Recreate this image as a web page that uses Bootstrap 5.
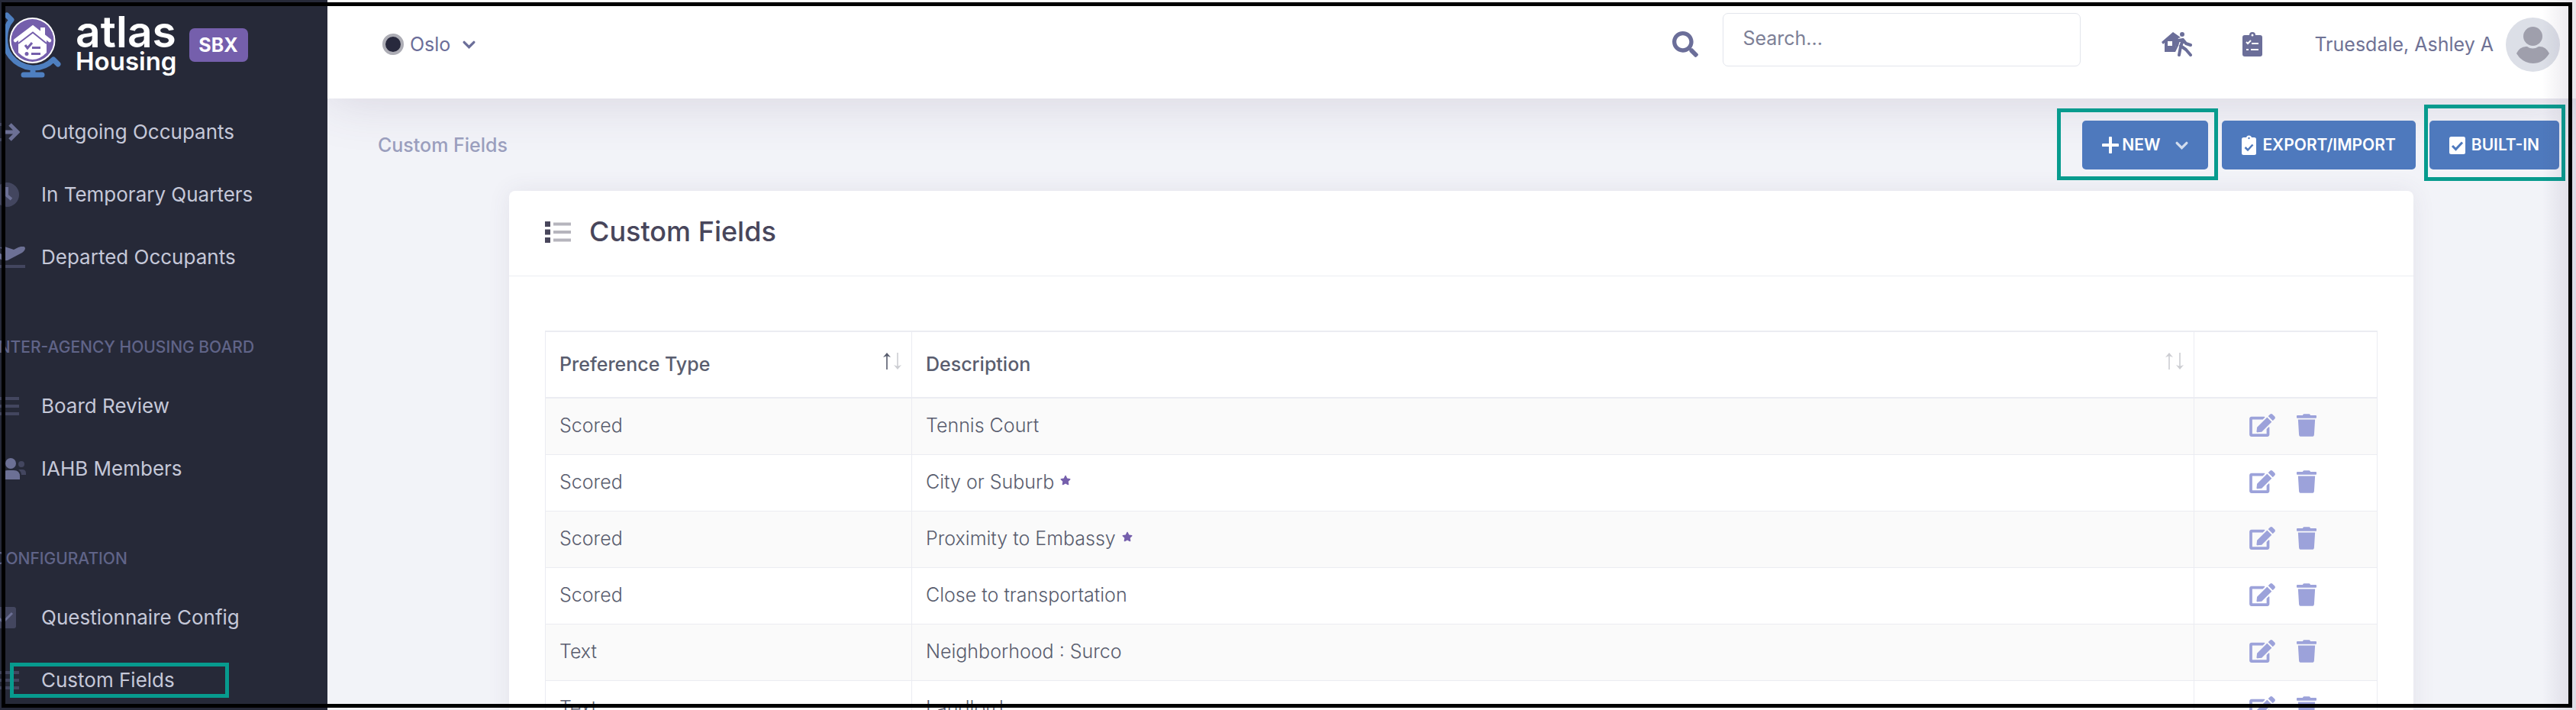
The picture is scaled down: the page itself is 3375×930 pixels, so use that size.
<!DOCTYPE html>
<html lang="en">
<head>
<meta charset="utf-8">
<meta name="viewport" content="width=device-width, initial-scale=1">
<title>Custom Fields - atlas Housing</title>
<link href="https://cdn.jsdelivr.net/npm/bootstrap@5.3.0/dist/css/bootstrap.min.css" rel="stylesheet">
<style>
  body { font-family: Inter, "Open Sans", sans-serif; font-size: 25px; line-height: 34px; color: #595d6e; background: #f2f3f8; }
  svg { fill: currentColor; display: block; flex: none; }
  a { text-decoration: none; }

  .side { width: 429px; background: #262938; overflow: hidden; position: relative; z-index: 2; }
  .brand-row { height: 132px; padding: 3px 0 0; }
  .brand-name { font-weight: 600; font-size: 57px; line-height: 45px; }
  .brand-sub { font-weight: 600; font-size: 33px; line-height: 33px; }
  .sbx { background: #755fac; width: 77px; height: 44px; margin-top: 34px; border-radius: 7px; font-size: 25px; font-weight: 700; }
  .side-list { margin-left: -8px; }
  .side-link { height: 82px; color: #c5c8d8; font-size: 26px; position: relative; }
  .side-icon { width: 62px; color: #6c7095; }
  .side-icon .dim { opacity: .42; }
  .side-head { height: 113px; padding-top: 60px; font-size: 21px; font-weight: 500; color: #606488; white-space: nowrap; }

  .topbar { height: 129px; padding: 17px 21px 0 72px; background: #fff; box-shadow: 0 0 70px rgba(82, 63, 105, .18); position: relative; }
  .topbar-part { height: 82px; }
  .site { color: #3b3d52; }
  .site-dot { width: 28px; height: 28px; border: 4px solid #adadb5; border-radius: 50%; background: #28293d; }
  .find-box { width: 469px; height: 70px; font-size: 25px; padding: 0 25px 5px; border: 1px solid #e2e5ec; border-radius: 7px; }
  .find-box::placeholder { color: #7d8096; }
  .tool { color: #6b6e99; background: none; border: 0; padding: 0; }
  .tool-leave { margin: 0 50px 0 106px; }
  .tool-tasks { margin: 0 68px 0 16px; }
  .user { color: #6f7295; }

  .content { padding: 29px 22px 0 66px; position: relative; }
  .crumb { color: #9a9ebd; font-weight: 500; }
  .acts { gap: 18px; }
  .act { height: 64px; border-radius: 5px; padding: 0 26px; font-size: 21px; font-weight: 600; background: #4e79bd; border: 0; color: #fff; }
  .mark-box { position: absolute; border: 5px solid #079b8e; pointer-events: none; z-index: 5; }
  .mark-new { inset: -16px -13px -14px -33px; }
  .mark-built { inset: -21px -8px -15px -7px; }
  .mark-side { left: 21px; width: 287px; top: 18px; bottom: 18px; }

  .panel { margin: 28px 191px 0 172px; border: 0; border-radius: 8px; box-shadow: 0 0 30px rgba(82, 63, 105, .09); }
  .panel-head { height: 112px; padding: 0 47px 3px; border-bottom: 1px solid #ebedf2; color: #48465b; }
  .panel-head h1 { font-size: 36px; font-weight: 500; }
  .panel-body { padding: 71px 47px 0; }
  .fields { table-layout: fixed; color: #595d6e; --bs-table-border-color: #ebecf2; border-color: #ebecf2; --bs-table-striped-bg: #fafafa; --bs-table-striped-color: #595d6e; --bs-table-color: #595d6e; }
  .fields th { height: 87px; padding: 0 13px 2px 18px; font-weight: 500; border-top-width: 2px; border-bottom-width: 2px; vertical-align: middle; }
  .fields td { height: 74px; padding: 0 18px 2px; font-weight: 300; vertical-align: middle; }
  .c-type { width: 20%; }
  .c-act { width: 10%; }
  .star { color: #755fac; }
  .row-tool { color: #9ca2da; background: none; border: 0; padding: 0; }
  .fade-sort { opacity: .3; }

  .edge { position: fixed; top: 0; right: 0; bottom: 0; width: 44px; background: linear-gradient(90deg, rgba(82, 63, 105, 0), rgba(82, 63, 105, .13)); pointer-events: none; z-index: 9; }
  .frame { position: fixed; inset: 3px 5px 3px 2px; border: 5px solid #000; pointer-events: none; z-index: 10; }
</style>
</head>
<body class="overflow-hidden">
<svg class="d-none" aria-hidden="true">
  <symbol id="i-edit" viewBox="0 0 576 512"><path d="M402.6 83.2l90.2 90.2c3.8 3.8 3.8 10 0 13.8L274.4 405.6l-92.8 10.3c-12.4 1.4-22.9-9.1-21.5-21.5l10.3-92.8L388.8 83.2c3.8-3.8 10-3.8 13.8 0zm162-22.9l-48.8-48.8c-15.2-15.2-39.9-15.2-55.2 0l-35.4 35.4c-3.8 3.8-3.8 10 0 13.8l90.2 90.2c3.8 3.8 10 3.8 13.8 0l35.4-35.4c15.2-15.3 15.2-40 0-55.2zM384 346.2V448H64V128h229.8c3.2 0 6.2-1.3 8.5-3.5l40-40c7.6-7.6 2.2-20.5-8.5-20.5H48C21.5 64 0 85.5 0 112v352c0 26.5 21.5 48 48 48h352c26.5 0 48-21.5 48-48V306.2c0-10.7-12.9-16-20.5-8.5l-40 40c-2.2 2.3-3.5 5.3-3.5 8.5z"/></symbol>
  <symbol id="i-trash" viewBox="0 0 448 512"><path d="M432 32H312l-9.4-18.7A24 24 0 0 0 281.1 0H166.8a23.72 23.72 0 0 0-21.4 13.3L136 32H16A16 16 0 0 0 0 48v32a16 16 0 0 0 16 16h416a16 16 0 0 0 16-16V48a16 16 0 0 0-16-16zM32 128l21.2 339a48 48 0 0 0 47.9 45h245.8a48 48 0 0 0 47.9-45L416 128H32z"/></symbol>
  <symbol id="i-star" viewBox="0 0 576 512"><path d="M259.3 17.8L194 150.2 47.9 171.5c-26.200 3.800-36.700 36.100-17.700 54.600l105.700 103-25 145.500c-4.500 26.300 23.200 46 46.400 33.700L288 439.600l130.700 68.700c23.200 12.200 50.900-7.400 46.400-33.700l-25-145.500 105.700-103c19-18.500 8.500-50.800-17.700-54.600L382 150.200 316.700 17.800c-11.700-23.600-45.600-23.900-57.400 0z"/></symbol>
  <symbol id="i-bars" viewBox="0 0 34 28"><path d="M0 0h7v7H0zM0 10.500h7v7H0zM0 21h7v7H0z"/><path opacity=".4" d="M11 1.500h23v4H11zM11 12h23v4H11zM11 22.500h23v4H11z"/></symbol>
  <symbol id="i-chev" viewBox="0 0 16 10"><path d="M2 2l6 6 6-6" fill="none" stroke="currentColor" stroke-width="3" stroke-linecap="round"/></symbol>
  <symbol id="i-sort" viewBox="0 0 10 22"><path d="M5 0L10 6 5.800 4.500V22H4.200V4.500L0 6z"/></symbol>
</svg>

<div class="d-flex vh-100">
  <nav class="side flex-shrink-0" aria-label="Main">
    <div class="brand-row d-flex align-items-start text-white">
      <svg width="99" height="108" viewBox="0 3 99 108" aria-hidden="true">
        <g fill="none" stroke="#4e7fc0" stroke-width="7" stroke-linecap="round" stroke-linejoin="round"><path d="M9 20L15 26C4 38 4 62 14 74C28 91 53 95 70 78L76 84M43 89v8M31 98h24"/></g>
        <circle cx="42.500" cy="53" r="30" fill="#fff"/><circle cx="42.500" cy="53" r="28" fill="#755fac"/>
        <path d="M24 51L43 36l18 15v18Q43 87 24 69z" fill="#fff"/>
        <path d="M20 53L43 35.500 65 53" fill="none" stroke="#fff" stroke-width="4.500" stroke-linecap="round"/><path d="M53 36h6v12l-6-5z" fill="#fff"/>
        <path d="M24 57L43 42.500 61 57" fill="none" stroke="#755fac" stroke-width="2"/>
        <path d="M33 59l3 4 6-7M42 62.500h11M41 70.500h12" fill="none" stroke="#755fac" stroke-width="3"/><circle cx="35" cy="70.500" r="2.500" fill="#755fac"/>
      </svg>
      <div class="pt-3">
        <div class="brand-name">atlas</div>
        <div class="brand-sub">Housing</div>
      </div>
      <span class="sbx d-flex align-items-center justify-content-center ms-3">SBX</span>
    </div>
    <div class="side-list">
      <a href="#" class="side-link d-flex align-items-center"><span class="side-icon"><svg width="34" height="28" viewBox="0 0 34 28"><path class="dim" d="M11 4H4v20h7" fill="none" stroke="currentColor" stroke-width="4"/><path d="M10 14h21M21 4l10 10-10 10" fill="none" stroke="currentColor" stroke-width="5"/></svg></span>Outgoing Occupants</a>
      <a href="#" class="side-link d-flex align-items-center"><span class="side-icon"><svg width="34" height="32" viewBox="0 0 34 32"><circle class="dim" cx="17" cy="16" r="16"/><path d="M17 6v11l6 5" fill="none" stroke="currentColor" stroke-width="4"/></svg></span>In Temporary Quarters</a>
      <a href="#" class="side-link d-flex align-items-center"><span class="side-icon"><svg width="41" height="28" viewBox="0 0 41 28"><path d="M0 8l5-1 5 3 5-2-7-7 6-1 12 4 6-3q8-3 9 1 0 3-4 6L18 18q-5 1-9-1z"/><path class="dim" d="M0 24h41v4H0z"/></svg></span>Departed Occupants</a>
      <div class="side-head">INTER-AGENCY HOUSING BOARD</div>
      <a href="#" class="side-link d-flex align-items-center"><span class="side-icon"><svg class="dim" width="33" height="24" viewBox="0 0 33 24"><path d="M0 0h33v4H0zM0 10h33v4H0zM0 20h33v4H0z"/></svg></span>Board Review</a>
      <a href="#" class="side-link d-flex align-items-center"><span class="side-icon"><svg width="42" height="28" viewBox="0 0 42 28"><circle cx="22" cy="7" r="7"/><path d="M10 28v-4q0-8 8-8h8q8 0 8 8v4z"/><g class="dim"><circle cx="36" cy="8" r="4"/><path d="M32 15h5q5 0 5 5v2h-6q0-4-4-7z"/></g></svg></span>IAHB Members</a>
      <div class="side-head">CONFIGURATION</div>
      <a href="#" class="side-link d-flex align-items-center"><span class="side-icon"><svg width="29" height="28" viewBox="0 0 29 28"><rect class="dim" width="29" height="28" rx="3"/><path d="M6 14l6 6L24 8" fill="none" stroke="currentColor" stroke-width="3"/></svg></span>Questionnaire Config</a>
      <a href="#" class="side-link d-flex align-items-center"><span class="side-icon"><svg class="dim" width="33" height="24" viewBox="0 0 33 24"><path d="M0 0h33v4H0zM0 10h33v4H0zM0 20h33v4H0z"/></svg></span>Custom Fields<span class="mark-box mark-side"></span></a>
    </div>
  </nav>

  <div class="flex-grow-1">
    <header class="topbar d-flex align-items-start justify-content-between">
      <button type="button" class="tool site topbar-part d-flex align-items-center gap-2">
        <span class="site-dot"></span><span>Oslo</span>
        <svg class="ms-2" width="17" height="11"><use href="#i-chev"/></svg>
      </button>
      <div class="d-flex align-items-start">
        <label for="find" class="tool topbar-part d-flex align-items-center me-4 pe-2" aria-label="Search"><svg width="34" height="34" viewBox="0 0 512 512"><path d="M505 442.700L405.300 343c-4.500-4.500-10.600-7-17-7H372c27.600-35.300 44-79.700 44-128C416 93.100 322.900 0 208 0S0 93.100 0 208s93.100 208 208 208c48.300 0 92.700-16.400 128-44v16.300c0 6.400 2.500 12.500 7 17l99.700 99.700c9.400 9.400 24.600 9.400 33.900 0l28.300-28.300c9.400-9.400 9.400-24.600.1-34zM208 336c-70.700 0-128-57.200-128-128 0-70.700 57.200-128 128-128 70.700 0 128 57.200 128 128 0 70.700-57.200 128-128 128z"/></svg></label>
        <input id="find" type="text" class="form-control find-box" placeholder="Search...">
        <div class="topbar-part d-flex align-items-center">
          <button type="button" class="tool tool-leave" aria-label="Departures"><svg width="40" height="32" viewBox="0 0 40 32"><path fill-rule="evenodd" d="M15 0L0 13l2 3 2-2v12h14l3-6-3-1 4-11 3-1zM8 12h6v6H8z"/><circle cx="27" cy="3" r="3"/><path d="M20 18l2-7 6-1 4 5 6 2M28 10l-3 9-2 11M25 18l7 5 6 7" fill="none" stroke="currentColor" stroke-width="4" stroke-linecap="round" stroke-linejoin="round"/></svg></button>
          <button type="button" class="tool tool-tasks" aria-label="Tasks"><svg width="26" height="32" viewBox="0 0 26 32"><rect y="4" width="26" height="28" rx="3"/><circle cx="13" cy="4" r="4"/><g fill="none" stroke="#fff" stroke-width="2"><path d="M5 13l2 2 4-4M12 15h9M11 23h10M5 23h3"/></g><circle cx="13" cy="4" r="1.500" fill="#fff"/></svg></button>
          <a href="#" class="user d-flex align-items-center gap-3">Truesdale, Ashley A
            <svg width="71" height="71" viewBox="0 0 71 71" aria-hidden="true"><circle cx="35.500" cy="35.500" r="35.500" fill="#dcdfe7"/><ellipse cx="35.500" cy="24.500" rx="12.500" ry="12.500" fill="#9f9fac"/><path d="M14 47q5-10 14-9 7 5 15 0 9-1 14 9-8 13-21.500 13T14 47z" fill="#9f9fac"/></svg></a>
        </div>
      </div>
    </header>

    <main class="content">
      <div class="d-flex align-items-center justify-content-between">
        <div class="crumb">Custom Fields</div>
        <div class="d-flex acts">
          <div class="position-relative">
            <button type="button" class="btn act d-flex align-items-center gap-1">
              <svg width="22" height="22" viewBox="0 0 22 22"><path d="M11 1.500v19M1.500 11h19" stroke="#fff" stroke-width="4" stroke-linecap="round"/></svg>NEW
              <svg class="ms-3 opacity-75" width="17" height="11"><use href="#i-chev"/></svg>
            </button>
            <span class="mark-box mark-new"></span>
          </div>
          <button type="button" class="btn act d-flex align-items-center gap-2">
            <svg width="19" height="26" viewBox="0 0 19 26"><rect y="3" width="19" height="23" rx="2.500"/><circle cx="9.500" cy="4" r="3.500"/><circle cx="9.500" cy="4" r="1.200" fill="#4e79bd"/><path d="M4.500 16l3.500 3.500 6.500-7" fill="none" stroke="#4e79bd" stroke-width="2.500"/></svg>EXPORT/IMPORT
          </button>
          <div class="position-relative">
            <button type="button" class="btn act d-flex align-items-center gap-2">
              <svg width="21" height="23" viewBox="0 0 21 23"><rect width="21" height="23" rx="2.500"/><path d="M4 12l4.500 4.500L17 7.500" fill="none" stroke="#4e79bd" stroke-width="3"/></svg>BUILT-IN
            </button>
            <span class="mark-box mark-built"></span>
          </div>
        </div>
      </div>

      <section class="card panel">
        <div class="panel-head d-flex align-items-center">
          <svg width="34" height="28" aria-hidden="true"><use href="#i-bars"/></svg>
          <h1 class="mb-0 ms-4">Custom Fields</h1>
        </div>
        <div class="panel-body">
          <table class="table table-bordered table-striped fields mb-0">
            <thead>
              <tr>
                <th class="c-type" scope="col"><div class="d-flex align-items-center justify-content-between">Preference Type<span class="d-flex gap-1 mb-2"><svg width="10" height="22"><use href="#i-sort"/></svg><svg class="fade-sort" width="10" height="22" viewBox="0 0 10 22"><use href="#i-sort" width="10" height="22" transform="rotate(180 5 11)"/></svg></span></div></th>
                <th scope="col"><div class="d-flex align-items-center justify-content-between">Description<span class="d-flex gap-1 mb-2 fade-sort"><svg width="10" height="22"><use href="#i-sort"/></svg><svg width="10" height="22" viewBox="0 0 10 22"><use href="#i-sort" width="10" height="22" transform="rotate(180 5 11)"/></svg></span></div></th>
                <th class="c-act" scope="col" aria-label="Actions"></th>
              </tr>
            </thead>
            <tbody id="rows"></tbody>
          </table>
        </div>
      </section>
    </main>
  </div>
</div>
<div class="edge"></div>
<div class="frame"></div>

<script src="https://cdn.jsdelivr.net/npm/bootstrap@5.3.0/dist/js/bootstrap.bundle.min.js"></script>
<script>
  const rows = [
    ["Scored", "Tennis Court"],
    ["Scored", "City or Suburb", true],
    ["Scored", "Proximity to Embassy", true],
    ["Scored", "Close to transportation"],
    ["Text", "Neighborhood : Surco"],
    ["Text", "Landlord"]
  ];
  document.getElementById("rows").innerHTML = rows.map(([type, text, starred]) => `
    <tr><td>${type}</td>
      <td><span class="d-flex align-items-center gap-2">${text}${starred ? '<svg class="star mb-1" width="14" height="14"><use href="#i-star"/></svg>' : ""}</span></td>
      <td><div class="d-flex justify-content-center gap-4 pe-2">
        <button type="button" class="row-tool" aria-label="Edit"><svg width="34" height="30"><use href="#i-edit"/></svg></button>
        <button type="button" class="row-tool ms-1" aria-label="Delete"><svg width="26" height="30"><use href="#i-trash"/></svg></button>
      </div></td></tr>`).join("");
</script>
</body>
</html>
